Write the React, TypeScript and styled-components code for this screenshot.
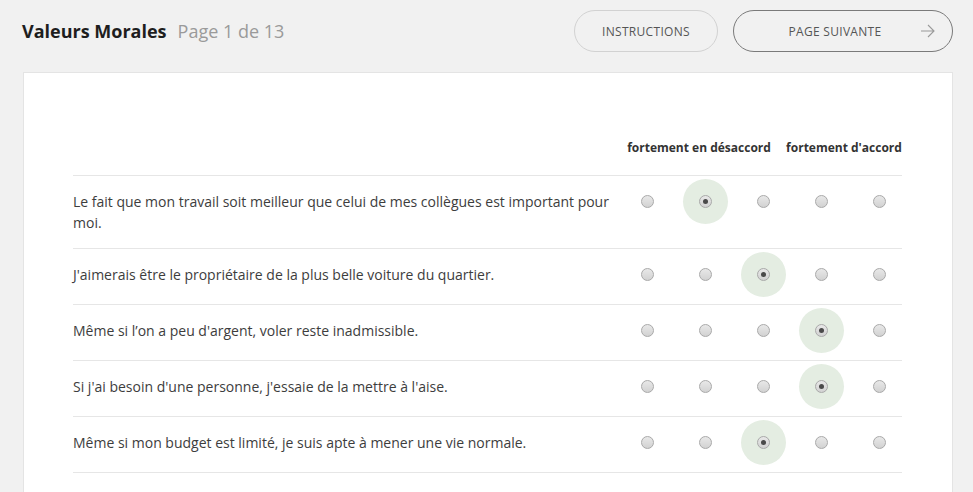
import React, { useState } from "react";
import styled, { createGlobalStyle } from "styled-components";

const Global = createGlobalStyle`
  html, body { margin: 0; padding: 0; background: #f1f1f1; }
  body { font-family: "Open Sans", "Noto Sans", sans-serif; color: #3d3d3d; }
`;

const Page = styled.div`
  padding: 10px 20px 0 23px;
`;

const TopBar = styled.header`
  display: flex;
  align-items: center;
  justify-content: space-between;
  height: 42px;
  margin-bottom: 20px;
`;

const TitleGroup = styled.div`
  display: flex;
  align-items: baseline;
  gap: 11px;
  margin-left: -1px;
`;

const Title = styled.h1`
  margin: 0;
  font-size: 18px;
  font-weight: 700;
  color: #1e1e1e;
`;

const PageInfo = styled.span`
  font-size: 18px;
  color: #9a9a9a;
`;

const Actions = styled.div`
  display: flex;
  gap: 15px;
  align-items: center;
`;

const PillButton = styled.button<{ $primary?: boolean; $w: number }>`
  position: relative;
  width: ${(p) => p.$w}px;
  height: 42px;
  border-radius: 21px;
  background: transparent;
  border: 1px solid ${(p) => (p.$primary ? "#7a7a7a" : "#d2d2d2")};
  font-family: "Open Sans", sans-serif;
  font-size: 12px;
  letter-spacing: 0.3px;
  color: #555;
  text-transform: uppercase;
  padding: ${(p) => (p.$primary ? "0 16px 0 0" : "0")};
  cursor: pointer;
`;

const Arrow = styled.svg`
  position: absolute;
  right: 17px;
  top: 50%;
  margin-top: -7px;
`;

const Card = styled.main`
  background: #fff;
  border: 1px solid #e4e4e4;
  padding: 0 50px 40px 49px;
  min-height: 440px;
`;

const Grid = styled.div`
  display: grid;
  grid-template-columns: 1fr repeat(5, 58px);
  padding-top: 49px;
`;

const HeadLabel = styled.div<{ $span: string }>`
  grid-column: ${(p) => p.$span};
  font-size: 12px;
  font-weight: 700;
  color: #333;
  text-align: center;
  line-height: 16px;
  padding: 18px 0 19px;
  white-space: nowrap;
`;

const HeadSpacer = styled.div``;

const Row = styled.div`
  display: contents;
`;

const Question = styled.div`
  grid-column: 1;
  font-size: 14px;
  line-height: 21px;
  color: #3d3d3d;
  padding: 15px 0;
  border-top: 1px solid #e6e6e6;
`;

const Cell = styled.label`
  display: flex;
  justify-content: center;
  align-items: flex-start;
  padding: 3px 0 7px 13px;
  border-top: 1px solid #e6e6e6;
  cursor: pointer;
`;

const Halo = styled.span<{ $on: boolean }>`
  width: 45px;
  height: 45px;
  border-radius: 50%;
  background: ${(p) => (p.$on ? "#e4ede2" : "transparent")};
  display: flex;
  align-items: center;
  justify-content: center;
`;

const Dot = styled.span<{ $on: boolean }>`
  width: 11px;
  height: 11px;
  border-radius: 50%;
  border: 1px solid #a9a9a9;
  background: linear-gradient(#e8e8e8, #d2d2d2);
  display: flex;
  align-items: center;
  justify-content: center;
  &::after {
    content: "";
    display: ${(p) => (p.$on ? "block" : "none")};
    width: 5px;
    height: 5px;
    border-radius: 50%;
    background: #4a4a4a;
  }
`;

const HiddenInput = styled.input`
  display: none;
`;

const Closing = styled.div`
  grid-column: 1 / -1;
  border-top: 1px solid #e6e6e6;
`;

const questions = [
  "Le fait que mon travail soit meilleur que celui de mes collègues est important pour moi.",
  "J'aimerais être le propriétaire de la plus belle voiture du quartier.",
  "Même si l’on a peu d'argent, voler reste inadmissible.",
  "Si j'ai besoin d'une personne, j'essaie de la mettre à l'aise.",
  "Même si mon budget est limité, je suis apte à mener une vie normale.",
];

export default function App() {
  const [answers, setAnswers] = useState<number[]>([1, 2, 3, 3, 2]);
  return (
    <>
      <Global />
      <Page>
        <TopBar>
          <TitleGroup>
            <Title>Valeurs Morales</Title>
            <PageInfo>Page 1 de 13</PageInfo>
          </TitleGroup>
          <Actions>
            <PillButton $w={144}>Instructions</PillButton>
            <PillButton $primary $w={220}>
              Page suivante
              <Arrow width="15" height="14" viewBox="0 0 15 14" fill="none">
                <path d="M1 7h13M8 1l6 6-6 6" stroke="#9a9a9a" strokeWidth="1.1" />
              </Arrow>
            </PillButton>
          </Actions>
        </TopBar>
        <Card>
          <Grid>
            <HeadSpacer />
            <HeadLabel $span="2 / 5">fortement en désaccord</HeadLabel>
            <HeadLabel $span="5 / 7">fortement d'accord</HeadLabel>
            {questions.map((q, i) => (
              <Row key={i}>
                <Question>{q}</Question>
                {[0, 1, 2, 3, 4].map((v) => (
                  <Cell key={v}>
                    <HiddenInput
                      type="radio"
                      name={`q${i}`}
                      checked={answers[i] === v}
                      onChange={() =>
                        setAnswers((a) => a.map((x, j) => (j === i ? v : x)))
                      }
                    />
                    <Halo $on={answers[i] === v}>
                      <Dot $on={answers[i] === v} />
                    </Halo>
                  </Cell>
                ))}
              </Row>
            ))}
            <Closing />
          </Grid>
        </Card>
      </Page>
    </>
  );
}
